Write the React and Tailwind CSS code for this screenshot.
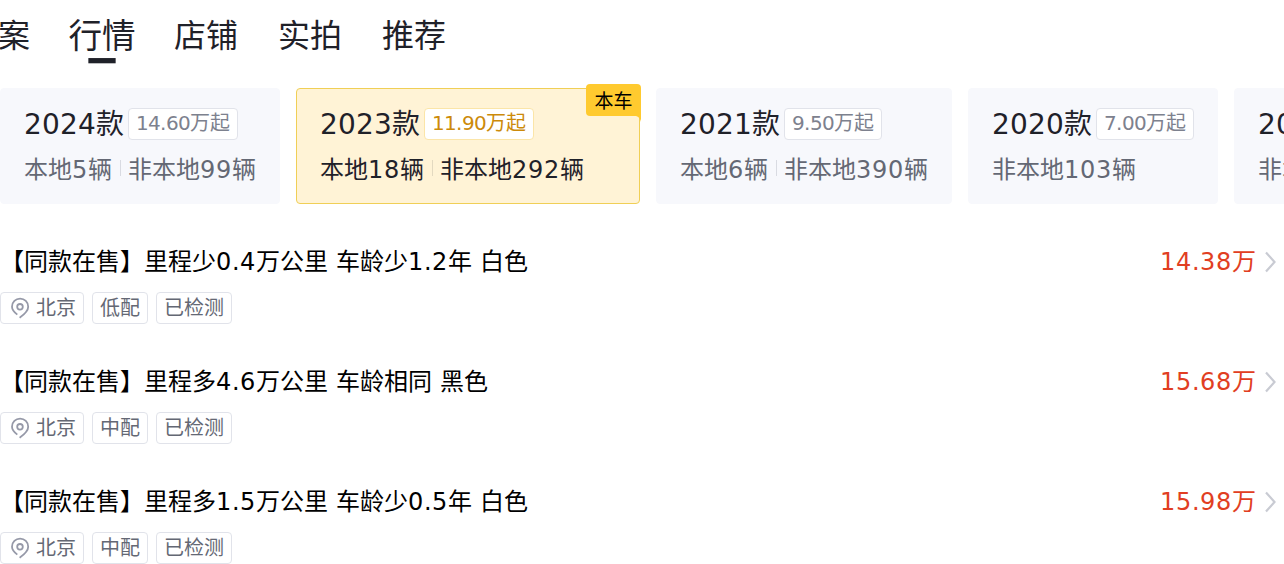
import React from 'react';

const tabs = ['方案', '行情', '店铺', '实拍', '推荐'];

const years = [
  { year: '2024', price: '14.60', counts: ['本地5辆', '非本地99辆'], width: 'w-[280px]' },
  { year: '2023', price: '11.90', counts: ['本地18辆', '非本地292辆'], width: 'w-[344px]', current: true },
  { year: '2021', price: '9.50', counts: ['本地6辆', '非本地390辆'], width: 'w-[296px]' },
  { year: '2020', price: '7.00', counts: ['非本地103辆'], width: 'w-[250px]' },
  { year: '2019', price: '6.50', counts: ['非本地86辆'], width: 'w-[250px]' },
];

const cars = [
  { title: '【同款在售】里程少0.4万公里 车龄少1.2年 白色', price: '14.38万', tags: ['低配', '已检测'] },
  { title: '【同款在售】里程多4.6万公里 车龄相同 黑色', price: '15.68万', tags: ['中配', '已检测'] },
  { title: '【同款在售】里程多1.5万公里 车龄少0.5年 白色', price: '15.98万', tags: ['中配', '已检测'] },
];

// Digits and separators get their own tracking, Chinese characters keep none
function Mixed({ text, digit = 'tracking-[0.73px]', mark = 'tracking-[0.37px]' }) {
  return text.split(/(\d+|[. ])/).map((part, i) => {
    if (/^\d+$/.test(part)) return <span key={i} className={digit}>{part}</span>;
    if (part === '.' || part === ' ') return <span key={i} className={mark}>{part}</span>;
    return part;
  });
}

function Tabs() {
  return (
    <nav className="-ml-[34px] flex h-[72px] gap-10 whitespace-nowrap text-[32px] leading-[72px] text-[#1f2129]">
      {tabs.map((tab) => (
        <div key={tab} className={tab === '行情' ? 'relative w-16 scale-105' : 'w-16'}>
          {tab}
          {tab === '行情' && (
            <span className="absolute bottom-[10px] left-[19px] h-[5px] w-[26px] bg-[#1f2129]" />
          )}
        </div>
      ))}
    </nav>
  );
}

function YearCard({ item }) {
  const { year, price, counts, width, current } = item;
  return (
    <div
      className={`relative h-[116px] shrink-0 rounded border pl-[23px] pt-[19px] ${width} ${
        current ? 'border-[#f0cf56] bg-[#fff3d6]' : 'border-[#f7f8fc] bg-[#f7f8fc]'
      }`}
    >
      <div className="flex h-8 items-center">
        <span className="w-[104px] pt-[2px] text-[28px] leading-8 text-[#1f2129]">
          <Mixed text={`${year}款`} digit="tracking-[0.19px]" />
        </span>
        <span
          className={`h-8 rounded border bg-white px-[7px] text-[20px] leading-[28px] ${
            current ? 'border-[#fbe5a8] text-[#cc8a0a]' : 'border-[#e1e3ea] text-[#7d818e]'
          }`}
        >
          <Mixed text={`${price}万起`} digit="tracking-[-0.72px]" mark="tracking-[-0.36px]" />
        </span>
      </div>
      <div
        className={`mt-[14px] flex h-8 items-center text-[24px] leading-8 ${
          current ? 'text-[#1f2129]' : 'text-[#646874]'
        }`}
      >
        <span><Mixed text={counts[0]} /></span>
        {counts[1] && (
          <>
            <span className={`-mt-1 ml-2 mr-[7px] h-4 w-px ${current ? 'bg-[#e3d9c0]' : 'bg-[#d9dbe2]'}`} />
            <span><Mixed text={counts[1]} /></span>
          </>
        )}
      </div>
      {current && (
        <div className="absolute -right-[2px] -top-[5px] h-8 w-[55px] rounded rounded-br-none bg-[#ffca2f] text-center text-[19px] leading-[34px] text-black">
          本车
          <svg className="absolute right-0 top-8" width="5" height="6" viewBox="0 0 5 6">
            <path d="M0 0H5V6Q4 1 0 0Z" fill="#ffca2f" />
          </svg>
        </div>
      )}
    </div>
  );
}

function PinIcon() {
  return (
    <svg className="mr-[6px] shrink-0" width="20" height="22" viewBox="0 0 20 22" fill="none" stroke="#9699a8" strokeWidth="1.8">
      <path d="M7.3 17.6C4 15 2 12.7 2 9.7a8.1 8.1 0 0 1 16.2 0c0 4.2-3.2 7.2-8.6 11" />
      <circle cx="10" cy="9.8" r="2.8" />
    </svg>
  );
}

function CarRow({ car }) {
  return (
    <div className="h-[120px]">
      <div className="flex h-9 items-center justify-between text-[24px] leading-9">
        <h3 className="text-black"><Mixed text={car.title} /></h3>
        <div className="flex items-center text-[#e13e22]">
          <span><Mixed text={car.price} /></span>
          <svg className="ml-2 mr-2" width="12" height="22" viewBox="0 0 12 22" fill="none" stroke="#c9cbd3" strokeWidth="2.2">
            <path d="M2 1.5L10.5 11L2 20.5" />
          </svg>
        </div>
      </div>
      <div className="mt-3 flex gap-2 text-[20px] leading-[30px] text-[#646874]">
        <span className="flex h-8 items-center rounded border border-[#e1e3ea] pl-[9px] pr-[7px]">
          <PinIcon />
          北京
        </span>
        {car.tags.map((tag) => (
          <span key={tag} className="h-8 rounded border border-[#e1e3ea] px-[7px]">{tag}</span>
        ))}
      </div>
    </div>
  );
}

function App() {
  return (
    <main className="h-[564px] overflow-hidden whitespace-nowrap bg-white font-['DejaVu_Sans','Noto_Sans_CJK_SC',sans-serif]">
      <Tabs />
      <div className="flex gap-4 pt-4">
        {years.map((item) => <YearCard key={item.year} item={item} />)}
      </div>
      <div className="pt-10">
        {cars.map((car) => <CarRow key={car.title} car={car} />)}
      </div>
    </main>
  );
}

export default App;
